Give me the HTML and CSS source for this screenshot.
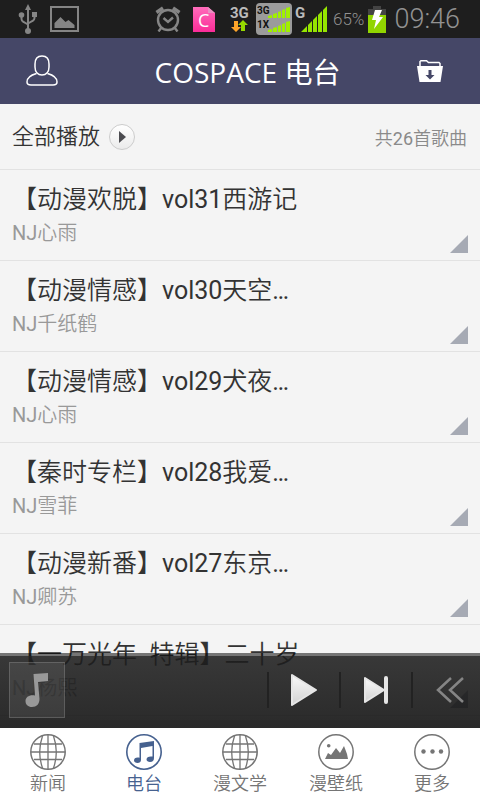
FILE: index.html
```html
<!DOCTYPE html>
<html lang="zh-CN">
<head>
<meta charset="utf-8">
<meta name="viewport" content="width=device-width, initial-scale=1">
<title>COSPACE 电台</title>
<link rel="stylesheet" href="styles.css">
</head>
<body>
<svg class="defs" width="0" height="0" aria-hidden="true">
  <defs>
    <linearGradient id="pink" x1="0" y1="0" x2="0" y2="1"><stop offset="0" stop-color="#ff6cbb"/><stop offset="1" stop-color="#fb2c98"/></linearGradient>
    <linearGradient id="silver" x1="0" y1="0" x2="0" y2="1"><stop offset="0" stop-color="#fafafa"/><stop offset="1" stop-color="#d2d2d2"/></linearGradient>
    <symbol id="globe" viewBox="0 0 36 36">
      <g fill="none" stroke="currentColor" stroke-width="1.3"><circle cx="18" cy="18" r="17.2" stroke-width="1.5"/><path d="M18 1v34M1 18h34M4 10h28M4 25.500h28M12.500 2C9 12 9 24 12.500 34M23.500 2C27 12 27 24 23.500 34"/></g>
    </symbol>
  </defs>
</svg>

<div class="status">
  <div class="status-left">
    <svg width="20" height="30" viewBox="0 0 20 30" fill="none" stroke="#858585" stroke-width="2"><path d="M10 5v20M3.500 11v4q0 2 2 3l4.500 2.500M16.500 11v3q0 2-2 3L10 19.500"/><g fill="#858585" stroke="none"><path d="M10 0l3 6H7zM14 8h5v5h-5z"/><circle cx="3.500" cy="11" r="2.800"/><circle cx="10" cy="27" r="3"/></g></svg>
    <svg width="29" height="26" viewBox="0 0 29 26"><path d="M1 1h27v24H1z" fill="none" stroke="#858585" stroke-width="2"/><path d="M4.500 22v-5l6-6 5 5 3-2 6 5v3z" fill="#858585"/></svg>
  </div>
  <div class="status-right">
    <svg width="26" height="26" viewBox="0 0 26 26" fill="none" stroke="#858585" stroke-width="2.400"><circle cx="13" cy="14" r="10"/><path d="M8.500 12l4.500 4 5-4.500M6.500 21.500L3.500 25.500M19.500 21.500L22.500 25.500"/><path d="M1.500 6.500L8 2M24.500 6.500L18 2" stroke-width="3.500"/></svg>
    <svg width="22" height="25" viewBox="0 0 22 25"><path d="M0 0h15l7 6v19H0z" fill="url(#pink)"/><path d="M15 0v6h7z" fill="#e88fc0"/><text x="5" y="20" class="app-letter">C</text></svg>
    <svg class="net-icon" width="24" height="32" viewBox="0 0 24 32"><text x="1" y="15" class="net">3G</text><path d="M5 18h4v6h3l-5 5-5-5h3z" fill="#ffa52a"/><path d="M12 28h4v-6h3l-5-5-5 5h3z" fill="#96d900"/></svg>
    <svg class="sim-icon" width="36" height="32" viewBox="0 0 36 32"><rect width="36" height="32" rx="4" fill="#9b9b9b"/><g fill="#a0f000"><path d="M12 15v-2l4-1v3zM17 15v-4l4-1v5zM22 15V9l3-1v7zM26 15V7l3-1v9zM30 15V5l4-1v11z"/><path d="M12 29v-2l4-1v3zM17 29v-4l4-1v5zM22 29v-6l3-1v7zM26 29v-8l3-1v9zM30 29V19l4-1v11z"/></g><text x="1" y="11" class="tiny">3G</text><text x="1" y="25" class="tiny">1X</text></svg>
    <svg width="32" height="32" viewBox="0 0 32 32"><path d="M6 29l6-6v6zM13 29v-7l4-4v11zM18 29V17l4-4v16zM23 29V12l4-4v21zM28 29V7l4-4v26z" fill="#96e600"/><text x="0" y="15" class="net">G</text></svg>
    <span class="percent">65%</span>
    <svg width="18" height="27" viewBox="0 0 18 27"><path d="M5 0h8v3h5v6H0V3h5z" fill="#444"/><path d="M0 9h18v18H0z" fill="#91d500"/><path d="M7 4h7l-3 7h4L6 23l2-9H4z" fill="#fff"/></svg>
    <time class="clock">09:46</time>
  </div>
</div>

<header class="bar">
  <button class="bar-btn" aria-label="用户"><svg width="32" height="32" viewBox="0 0 32 32" fill="none" stroke="#fff" stroke-width="1.500"><path d="M16 1c5 0 7 3 7 8v3c0 5-3 8-7 8s-7-3-7-8V9c0-5 2-8 7-8z"/><path d="M10.500 18.500C5 20 1 22 1 27c0 3 2 3 4 3h22c2 0 4 0 4-3 0-5-4-7-9.500-8.500"/></svg></button>
  <h1>COSPACE 电台</h1>
  <button class="bar-btn" aria-label="下载"><svg width="26" height="22" viewBox="0 0 26 22"><path d="M3 6V1.500l1-.8h5.500l2 1.800H22l1 1V6" fill="none" stroke="#fff" stroke-width="1.500"/><path fill-rule="evenodd" d="M0 6h26l-2.500 16h-21zM11.500 10v5H8.500l4.500 4.500 4.500-4.500h-3v-5z" fill="#fff"/></svg></button>
</header>

<main class="content">
  <div class="summary">
    <button class="play-all">全部播放
      <span class="disc"><svg width="8" height="12" viewBox="0 0 8 12"><path d="M1 0l7 6-7 6z" fill="#4c4c50"/></svg></span>
    </button>
    <span class="count">共26首歌曲</span>
  </div>
  <ul class="tracks">
    <li><button class="track"><span class="name">【动漫欢脱】vol31西游记</span><span class="host">NJ心雨</span></button></li>
    <li><button class="track"><span class="name">【动漫情感】vol30天空…</span><span class="host">NJ千纸鹤</span></button></li>
    <li><button class="track"><span class="name">【动漫情感】vol29犬夜…</span><span class="host">NJ心雨</span></button></li>
    <li><button class="track"><span class="name">【秦时专栏】vol28我爱…</span><span class="host">NJ雪菲</span></button></li>
    <li><button class="track"><span class="name">【动漫新番】vol27东京…</span><span class="host">NJ卿苏</span></button></li>
    <li><button class="track"><span class="name">【一万光年  特辑】二十岁</span><span class="host">NJ杨熙</span></button></li>
  </ul>
  <section class="player" aria-label="播放器">
    <div class="cover"><svg width="24" height="36" viewBox="0 0 24 36"><path d="M8.500 2L23 1v8l-10 1 1.500 17c0 5-3 8-7.500 8-4 0-6.500-2.500-6.500-6 0-4 4-6.500 9.500-5.500z" fill="#999"/></svg></div>
    <button class="ctl" aria-label="播放"><svg width="28" height="34" viewBox="0 0 28 34"><path d="M2 2l24 15L2 32z" fill="url(#silver)" stroke="#e6e6e6" stroke-width="2" stroke-linejoin="round"/></svg></button>
    <button class="ctl" aria-label="下一首"><svg width="26" height="28" viewBox="0 0 26 28"><path d="M2 2l19 12L2 26z" fill="url(#silver)" stroke="#e6e6e6" stroke-width="2" stroke-linejoin="round"/><path d="M23 2v24" stroke="#e6e6e6" stroke-width="4" stroke-linecap="round"/></svg></button>
    <button class="ctl" aria-label="收起"><svg width="28" height="26" viewBox="0 0 28 26" fill="none" stroke="#858585" stroke-width="2.500"><path d="M15 1L2 13l13 12M27 1L14 13l13 12"/></svg></button>
  </section>
</main>

<nav class="tabs">
  <a href="#news"><svg width="36" height="36"><use href="#globe"/></svg>新闻</a>
  <a href="#radio" class="active" aria-current="page"><svg width="36" height="36" viewBox="0 0 36 36"><circle cx="18" cy="18" r="17.200" fill="none" stroke="currentColor" stroke-width="1.600"/><path d="M13.500 9L28 7v17q0 4-4 4c-2 0-3.500-1-3.500-2.500 0-2.500 2.500-3.500 6-3V12l-11.500 2v12c0 2-1.500 3-3.500 3S8 28 8 26.500c0-2 2-3.500 5.500-2.700z" fill="currentColor"/></svg>电台</a>
  <a href="#literature"><svg width="36" height="36"><use href="#globe"/></svg>漫文学</a>
  <a href="#wallpaper"><svg width="36" height="36" viewBox="0 0 36 36"><circle cx="18" cy="18" r="17.200" fill="none" stroke="currentColor" stroke-width="1.500"/><circle cx="10.700" cy="11.700" r="1.800" fill="currentColor"/><path d="M7 25l3-6 3 2 5-7 4 5 4-7 3 8 1 5z" fill="currentColor"/></svg>漫壁纸</a>
  <a href="#more"><svg width="36" height="36" viewBox="0 0 36 36"><circle cx="18" cy="18" r="17.200" fill="none" stroke="currentColor" stroke-width="1.500"/><g fill="currentColor"><circle cx="9.500" cy="17.500" r="2.200"/><circle cx="18.500" cy="17.500" r="2.200"/><circle cx="27" cy="17.500" r="2.200"/></g></svg>更多</a>
</nav>
</body>
</html>
```
FILE: styles.css
```css
* { box-sizing: border-box; }

body {
  margin: 0;
  height: 100vh;
  display: flex;
  flex-direction: column;
  background: #f4f4f4;
  color: #333;
  font-family: Roboto, "Noto Sans CJK SC DemiLight", "Noto Sans CJK SC Light", "Noto Sans CJK SC", sans-serif;
}

button {
  padding: 0;
  border: 0;
  background: none;
  color: inherit;
  font: inherit;
  text-align: left;
}

svg { display: block; flex: none; }
.defs { position: absolute; }

.status {
  height: 38px;
  flex: none;
  display: flex;
  justify-content: space-between;
  padding: 0 20px 0 18px;
  background: #1e1e1e;
  color: #929292;
  font-weight: 300;
}

.status-left,
.status-right { display: flex; align-items: center; }
.status-left { gap: 12px; }
.status-right { gap: 6px; }
.status-right svg:first-child { margin-right: 6px; }
.status-right svg:nth-child(2) { margin-right: 8px; }
.status-right .net-icon { margin-right: -3px; }
.status-right .sim-icon { margin-right: -3px; }
.percent { font-size: 17px; margin-right: -2px; }
.clock { font-size: 27px; margin-left: 2px; }
.app-letter { font: 18px "Open Sans", sans-serif; fill: #fff; }
.net { font: bold 15px Roboto, sans-serif; fill: #bbb; }
.tiny { font: bold 10px Roboto, sans-serif; fill: #111; }

.bar {
  height: 66px;
  flex: none;
  display: flex;
  align-items: center;
  background: #454767;
  color: #fff;
}

.bar-btn {
  width: 84px;
  height: 66px;
  display: flex;
  align-items: center;
  justify-content: center;
}

.bar-btn:last-child { width: 100px; }

.bar h1 {
  flex: 1;
  margin: 0;
  padding: 2px 0 0 31px;
  font: 28px/40px "Open Sans", "Noto Sans CJK SC", sans-serif;
  text-align: center;
}

.content {
  position: relative;
  flex: 1;
  min-height: 0;
  overflow: hidden;
}

.summary {
  height: 66px;
  display: flex;
  align-items: center;
  justify-content: space-between;
  padding: 0 13px 0 12px;
  border-bottom: 1px solid #e2e2e2;
}

.play-all {
  display: flex;
  align-items: center;
  gap: 9px;
  font-size: 22px;
  line-height: 30px;
}

.disc {
  width: 26px;
  height: 26px;
  display: flex;
  align-items: center;
  justify-content: center;
  border: 1px solid #ccc;
  border-radius: 50%;
  background: linear-gradient(#fff, #ebebeb);
}

.count { font-size: 18px; color: #8a8a8a; }

.tracks { margin: 0; padding: 0; list-style: none; }

.track {
  position: relative;
  width: 100%;
  height: 91px;
  display: flex;
  flex-direction: column;
  padding: 12px 12px 0;
  border-bottom: 1px solid #e2e2e2;
}

.track::after {
  content: "";
  position: absolute;
  right: 12px;
  bottom: 7px;
  width: 18px;
  height: 18px;
  background: #a6aab4;
  clip-path: polygon(100% 0, 100% 100%, 0 100%);
}

.name { font-size: 25px; line-height: 36px; white-space: pre; }
.host { font-size: 20px; line-height: 30px; color: #999; }

.player {
  position: absolute;
  left: 0;
  right: 0;
  bottom: 0;
  height: 75px;
  display: flex;
  align-items: center;
  padding-bottom: 4px;
  border-top: 3px solid rgba(0, 0, 0, .52);
  background: linear-gradient(rgba(30, 30, 30, .88), rgba(14, 14, 14, .88)) padding-box;
}

.cover {
  width: 56px;
  height: 56px;
  display: flex;
  align-items: center;
  justify-content: center;
  margin-left: 9px;
  margin-right: auto;
  border: 1px solid rgba(255, 255, 255, .16);
  background: rgba(255, 255, 255, .08);
}

.ctl {
  width: 72px;
  height: 36px;
  display: flex;
  align-items: center;
  justify-content: center;
  border-left: 2px solid #222;
}

.ctl:last-child { width: 69px; padding-left: 6px; }

.tabs {
  height: 72px;
  flex: none;
  display: flex;
  background: #fff;
}

.tabs a {
  flex: 1;
  display: flex;
  flex-direction: column;
  align-items: center;
  padding-top: 6px;
  gap: 1px;
  color: #757575;
  font-size: 18px;
  line-height: 26px;
  text-decoration: none;
}

.tabs .active { color: #46618f; }
```
